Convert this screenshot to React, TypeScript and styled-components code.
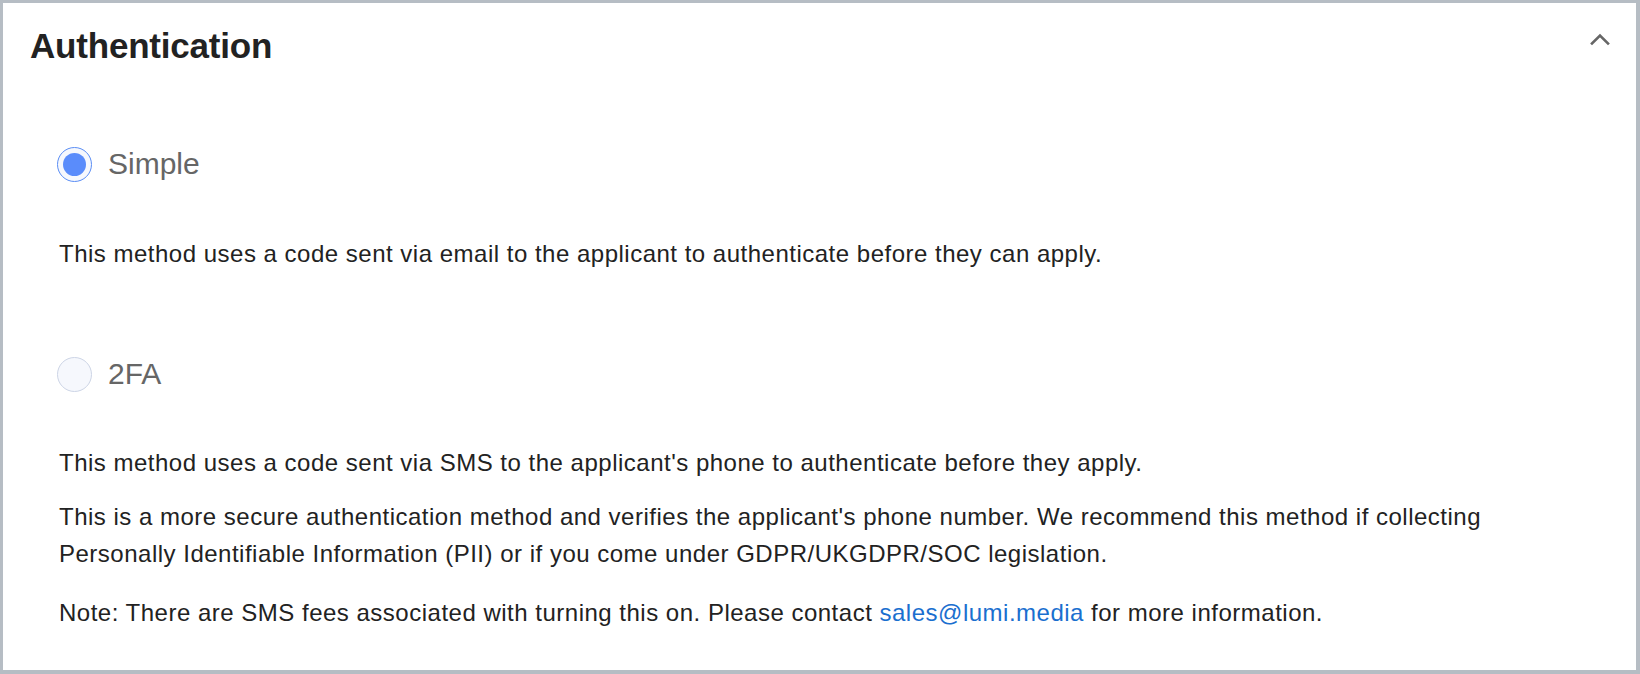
import styled, { createGlobalStyle } from 'styled-components';
import { useState } from 'react';

const GlobalStyle = createGlobalStyle`
  html, body {
    margin: 0;
    padding: 0;
    background: #ffffff;
  }
  body {
    font-family: "Liberation Sans", Arial, Helvetica, sans-serif;
    color: #222222;
  }
`;

const Card = styled.div`
  height: 674px;
  box-sizing: border-box;
  border-style: solid;
  border-color: #b6bdc4;
  border-width: 3px 4px 4px 3px;
  background: #ffffff;
`;

const Header = styled.div`
  display: flex;
  align-items: center;
  justify-content: space-between;
  padding: 23px 22px 0 27px;
`;

const Title = styled.h2`
  margin: 0;
  font-size: 35px;
  line-height: 40px;
  font-weight: 700;
  color: #222222;
  letter-spacing: -0.2px;
`;

const Toggle = styled.button`
  display: flex;
  align-items: center;
  justify-content: center;
  width: 28px;
  height: 28px;
  padding: 0;
  border: 0;
  background: none;
  cursor: pointer;
  margin-top: -14px;
`;

const Body = styled.div`
  padding: 80px 47px 0 54px;
`;

const Option = styled.div<{ $gap: number }>`
  margin-bottom: ${(p) => p.$gap}px;
`;

const RadioRow = styled.label`
  display: flex;
  align-items: center;
  gap: 16px;
  cursor: pointer;
`;

const Circle = styled.span<{ $checked: boolean }>`
  width: 35px;
  height: 35px;
  box-sizing: border-box;
  border-radius: 50%;
  border: 1px solid ${(p) => (p.$checked ? '#5b8ef5' : '#cdd5e6')};
  background: #f6f8fd;
  display: flex;
  align-items: center;
  justify-content: center;
  flex-shrink: 0;
  &::after {
    content: '';
    width: 23px;
    height: 23px;
    border-radius: 50%;
    background: #5a8cfb;
    display: ${(p) => (p.$checked ? 'block' : 'none')};
  }
`;

const Label = styled.span`
  font-size: 30px;
  line-height: 36px;
  color: #666666;
`;

const Text = styled.p<{ $top?: number; $bottom?: number }>`
  margin: ${(p) => p.$top ?? 0}px 0 ${(p) => p.$bottom ?? 20}px 2px;
  font-size: 24px;
  line-height: 37px;
  letter-spacing: 0.5px;
  color: #222222;
`;

const Link = styled.a`
  color: #1a6fcf;
  text-decoration: none;
`;

const Chevron = () => (
  <svg width="22" height="14" viewBox="0 0 22 14" fill="none">
    <path d="M3 11.5 L11 3.5 L19 11.5" stroke="#666666" strokeWidth="2.6" strokeLinecap="square" />
  </svg>
);

export default function App() {
  const [method, setMethod] = useState<'simple' | '2fa'>('simple');

  return (
    <>
      <GlobalStyle />
      <Card>
        <Header>
          <Title>Authentication</Title>
          <Toggle aria-label="Collapse">
            <Chevron />
          </Toggle>
        </Header>
        <Body>
          <Option $gap={84}>
            <RadioRow onClick={() => setMethod('simple')}>
              <Circle $checked={method === 'simple'} />
              <Label>Simple</Label>
            </RadioRow>
            <Text $top={53} $bottom={0}>
              This method uses a code sent via email to the applicant to authenticate before they can apply.
            </Text>
          </Option>
          <Option $gap={0}>
            <RadioRow onClick={() => setMethod('2fa')}>
              <Circle $checked={method === '2fa'} />
              <Label>2FA</Label>
            </RadioRow>
            <Text $top={52} $bottom={17}>
              This method uses a code sent via SMS to the applicant's phone to authenticate before they apply.
            </Text>
            <Text $bottom={22}>
              This is a more secure authentication method and verifies the applicant's phone number. We recommend this
              method if collecting Personally Identifiable Information (PII) or if you come under GDPR/UKGDPR/SOC
              legislation.
            </Text>
            <Text>
              Note: There are SMS fees associated with turning this on. Please contact{' '}
              <Link href="mailto:sales@lumi.media">sales@lumi.media</Link> for more information.
            </Text>
          </Option>
        </Body>
      </Card>
    </>
  );
}
